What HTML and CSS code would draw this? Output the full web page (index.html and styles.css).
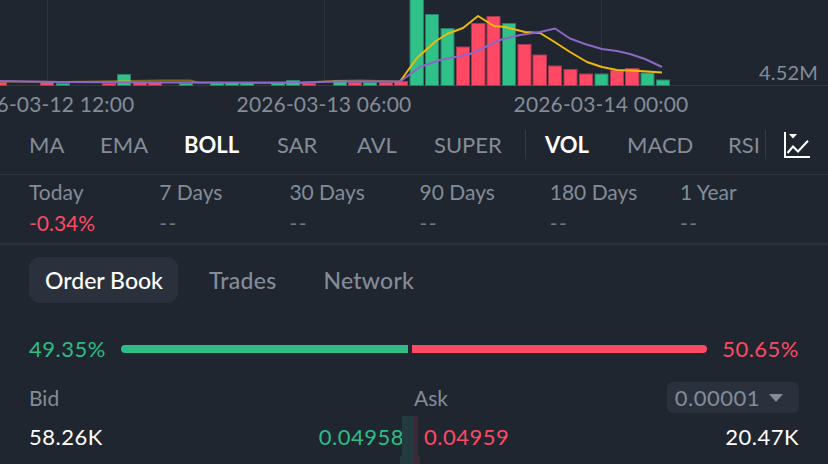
FILE: index.html
```html
<!DOCTYPE html>
<html lang="en">
<head>
    <meta charset="UTF-8">
    <meta name="viewport" content="width=device-width, initial-scale=1.0">
    <title>Order Book</title>
    <link rel="stylesheet" href="styles.css">
</head>
<body>
    <div class="chart">
        <svg class="chart-svg" width="828" height="86" viewBox="0 0 828 86">
            <line class="grid" x1="47.5" y1="0" x2="47.5" y2="85"/>
            <line class="grid" x1="324.5" y1="0" x2="324.5" y2="85"/>
            <line class="grid" x1="601.5" y1="0" x2="601.5" y2="85"/>
            <line class="base" x1="0" y1="85.5" x2="828" y2="85.5"/>

            <rect class="down" x="-6.5" y="82.5" width="13" height="3"/>
            <rect class="down" x="40.5" y="82.5" width="13" height="3"/>
            <rect class="up" x="56.5" y="83.5" width="13" height="2"/>
            <rect class="down" x="102.5" y="83.5" width="13" height="2"/>
            <rect class="up" x="117.5" y="74.5" width="13" height="11"/>
            <rect class="down" x="133.5" y="82.5" width="13" height="3"/>
            <rect class="down" x="148.5" y="82.5" width="13" height="3"/>
            <rect class="up" x="179.5" y="83.5" width="13" height="2"/>
            <rect class="up" x="210.5" y="83.5" width="13" height="2"/>
            <rect class="up" x="225.5" y="83.5" width="13" height="2"/>
            <rect class="up" x="240.5" y="83.5" width="13" height="2"/>
            <rect class="up" x="271.5" y="83.5" width="13" height="2"/>
            <rect class="up" x="286.5" y="80.5" width="13" height="5"/>
            <rect class="down" x="302.5" y="83.5" width="13" height="2"/>
            <rect class="up" x="333.5" y="80.5" width="13" height="5"/>
            <rect class="down" x="348.5" y="82.5" width="13" height="3"/>
            <rect class="up" x="363.5" y="82.5" width="13" height="3"/>
            <rect class="down" x="379.5" y="82.5" width="13" height="3"/>
            <rect class="down" x="394.5" y="81.5" width="13" height="4"/>

            <rect class="up" x="410" y="-2" width="13.5" height="87.5"/>
            <rect class="up" x="425.5" y="14.5" width="13" height="71"/>
            <rect class="up" x="441" y="28.5" width="13" height="57"/>
            <rect class="down" x="456.5" y="47" width="13" height="38.5"/>
            <rect class="down" x="471.5" y="23.5" width="13.5" height="62"/>
            <rect class="down" x="487" y="16.5" width="13" height="69"/>
            <rect class="up" x="502.5" y="23.5" width="13" height="62"/>
            <rect class="down" x="518" y="44.5" width="13" height="41"/>
            <rect class="down" x="533" y="55" width="13.5" height="30.5"/>
            <rect class="down" x="548.5" y="66" width="13" height="19.5"/>
            <rect class="down" x="564" y="69.5" width="13" height="16"/>
            <rect class="down" x="579.5" y="74" width="13" height="11.5"/>
            <rect class="up" x="595" y="74" width="13" height="11.5"/>
            <rect class="down" x="610.5" y="70.5" width="13" height="15"/>
            <rect class="down" x="625.5" y="68.5" width="13.5" height="17"/>
            <rect class="up" x="641" y="73" width="13" height="12.5"/>
            <rect class="up" x="656.5" y="80" width="13" height="5.5"/>

            <polyline class="line-yellow line-dim" points="0,81.5 60,82 130,81 160,80.5 190,80.5 198,82.5 230,83 300,83 330,81 360,80.5 400,81.5"/>
            <polyline class="line-yellow" points="400,81.5 417,58 436,41 447,34 463,28 478,16 494,26 505,27 525,32 540,33 553,41 570,52 587,62 602,67 617,70 640,71 662,72.5"/>
            <polyline class="line-purple" points="0,81 60,82 150,82.5 300,82.5 340,81.5 400,81.5 420,67 440,60 465,55 470,54 500,40 520,35 540,32 555,28.5 570,38.5 585,44 602,49 617,51 630,54 645,59 662,67"/>
        </svg>
        <span class="scale-label">4.52M</span>
    </div>

    <div class="axis">
        <span>2026-03-12 12:00</span>
        <span>2026-03-13 06:00</span>
        <span>2026-03-14 00:00</span>
    </div>

    <div class="indicators">
        <span>MA</span>
        <span>EMA</span>
        <span class="active">BOLL</span>
        <span>SAR</span>
        <span>AVL</span>
        <span>SUPER</span>
        <i class="sep"></i>
        <span class="active">VOL</span>
        <span>MACD</span>
        <span>RSI</span>
        <i class="sep"></i>
        <svg class="chart-icon" width="26" height="26" viewBox="0 0 26 26">
            <path d="M1 0V25H26" fill="none" stroke="#fff" stroke-width="2"/>
            <path d="M3.5 21L9 14.5L14 19.5L24 8.7" fill="none" stroke="#fff" stroke-width="2"/>
            <path d="M5 2H13L9 6.5Z" fill="#fff"/>
        </svg>
    </div>

    <div class="stats">
        <div class="stat"><div class="stat-label">Today</div><div class="stat-value neg">-0.34%</div></div>
        <div class="stat"><div class="stat-label">7 Days</div><div class="stat-value empty">--</div></div>
        <div class="stat"><div class="stat-label">30 Days</div><div class="stat-value empty">--</div></div>
        <div class="stat"><div class="stat-label">90 Days</div><div class="stat-value empty">--</div></div>
        <div class="stat"><div class="stat-label">180 Days</div><div class="stat-value empty">--</div></div>
        <div class="stat"><div class="stat-label">1 Year</div><div class="stat-value empty">--</div></div>
    </div>

    <div class="tabs">
        <span class="tab selected">Order Book</span>
        <span class="tab">Trades</span>
        <span class="tab">Network</span>
    </div>

    <div class="ratio">
        <span class="pos num">49.35%</span>
        <div class="ratio-bar">
            <div class="ratio-buy"></div>
            <div class="ratio-sell"></div>
        </div>
        <span class="neg num">50.65%</span>
    </div>

    <div class="book-head">
        <span class="book-bid">Bid</span>
        <span class="book-ask">Ask</span>
        <span class="precision"><span class="num">0.00001</span><i class="caret"></i></span>
    </div>

    <div class="book-row">
        <div class="side side-buy">
            <span class="qty num">58.26K</span>
            <span class="pos num">0.04958</span>
            <i class="depth depth-buy"></i>
            <i class="depth depth-buy-next"></i>
        </div>
        <div class="side side-sell">
            <i class="depth depth-sell"></i>
            <i class="depth depth-sell-next"></i>
            <span class="neg num">0.04959</span>
            <span class="qty num">20.47K</span>
        </div>
    </div>
</body>
</html>
```

FILE: styles.css
```css
html, body {
    margin: 0;
    padding: 0;
}

body {
    width: 828px;
    height: 464px;
    overflow: hidden;
    background-color: #1f2630;
    color: #848c98;
    font-family: Lato, "Liberation Sans", sans-serif;
    font-size: 21px;
}

.pos {
    color: #2ebd85;
}

.neg {
    color: #fd4a63;
}

/* digits run wider in the original font */
.num {
    font-size: 22px;
    letter-spacing: 0.5px;
}

/* chart */
.chart {
    position: relative;
    height: 86px;
}

.chart-svg {
    display: block;
}

.grid {
    stroke: #2c333e;
    stroke-width: 1;
}

.base {
    stroke: #323844;
    stroke-width: 1;
}

.up {
    fill: #2fc188;
    stroke: #28806c;
    stroke-width: 1;
}

.down {
    fill: #ff4863;
    stroke: #a63a50;
    stroke-width: 1;
}

.line-yellow, .line-purple {
    fill: none;
    stroke-width: 2;
    stroke-linejoin: round;
}

.line-yellow {
    stroke: #f0b90b;
}

.line-dim {
    opacity: 0.45;
}

.line-purple {
    stroke: #8e66c6;
}

.scale-label {
    position: absolute;
    right: 10px;
    bottom: 2px;
    line-height: 24px;
    font-size: 20px;
    letter-spacing: 0.2px;
}

.axis {
    display: flex;
    height: 34px;
    margin-left: -91.5px;
    align-items: center;
    font-size: 21px;
    letter-spacing: 0.15px;
}

.axis span {
    flex: 0 0 277px;
    text-align: center;
    white-space: nowrap;
}

/* indicator tabs */
.indicators {
    display: grid;
    grid-template-columns: 71px 84px 93px 80px 77px 90.5px 20.5px 82px 101px 37px 19px 26px;
    align-items: center;
    height: 49px;
    padding: 0 0 5px 29px;
    border-bottom: 1px solid #2c333e;
    font-size: 22px;
    white-space: nowrap;
}

.indicators .active {
    color: #fff;
    font-weight: 700;
}

.sep {
    width: 1px;
    height: 29px;
    background-color: #343b47;
}

/* change per period */
.stats {
    display: flex;
    height: 68px;
    padding-left: 29px;
    border-bottom: 2px solid #2a313c;
}

.stat {
    width: 130.2px;
}

.stat-label {
    margin-top: 5px;
    line-height: 24px;
}

.stat-value {
    margin-top: 7px;
    line-height: 24px;
}

.stat-value.empty {
    letter-spacing: 1.5px;
    color: #6f7783;
}

/* order book tabs */
.tabs {
    display: flex;
    align-items: center;
    margin: 12px 0 0 29px;
    height: 46px;
    gap: 15px;
    font-size: 23px;
    font-weight: 500;
    letter-spacing: 0.25px;
}

.tab {
    padding: 0 16px;
    line-height: 46px;
    border-radius: 11px;
}

.tab.selected {
    padding: 0 15px 0 16px;
    letter-spacing: 0;
    background-color: #2a313c;
    color: #fff;
}

/* buy / sell ratio */
.ratio {
    display: flex;
    justify-content: space-between;
    align-items: center;
    height: 28px;
    margin-top: 32px;
    padding: 0 29px;
}

.ratio > span {
    position: relative;
    top: -1px;
}

.ratio-bar {
    display: flex;
    width: 586px;
    height: 8px;
    gap: 4px;
}

.ratio-buy {
    width: 287px;
    background-color: #2ebd85;
    border-radius: 4px 0 0 4px;
}

.ratio-sell {
    flex: 1;
    background-color: #fd4a63;
    border-radius: 0 4px 4px 0;
}

/* book header */
.book-head {
    display: flex;
    align-items: center;
    height: 31px;
    margin-top: 19px;
    padding: 0 29px;
}

.book-bid {
    width: 385px;
}

.book-ask {
    flex: 1;
}

.precision {
    display: flex;
    align-items: center;
    height: 31px;
    padding: 0 16px 0 8px;
    border-radius: 6px;
    background-color: #2a313c;
}

.caret {
    width: 0;
    height: 0;
    margin-left: 9px;
    border-left: 7px solid transparent;
    border-right: 7px solid transparent;
    border-top: 8px solid #848c98;
}

/* first book row */
.book-row {
    display: flex;
    height: 51px;
    margin-top: 3px;
    padding: 0 29px;
}

.side {
    position: relative;
    display: flex;
    flex: 0 0 50%;
    justify-content: space-between;
    align-items: center;
    height: 40px;
    box-sizing: border-box;
}

.side span {
    position: relative;
}

.side-buy {
    padding-right: 10px;
}

.side-sell {
    padding-left: 10px;
}

.qty {
    color: #fff;
}

.depth {
    position: absolute;
    top: 0;
    height: 48px;
}

.depth-buy {
    right: 0;
    width: 12px;
    background: #233a3e;
}

.depth-sell {
    left: 0;
    width: 4px;
    background: #3a2a36;
}

.depth-buy-next, .depth-sell-next {
    top: 40px;
    height: 8px;
}

.depth-buy-next {
    right: 0;
    width: 14px;
    background: #233a3e;
}

.depth-sell-next {
    left: 0;
    width: 6px;
    background: #3a2a36;
}
```
